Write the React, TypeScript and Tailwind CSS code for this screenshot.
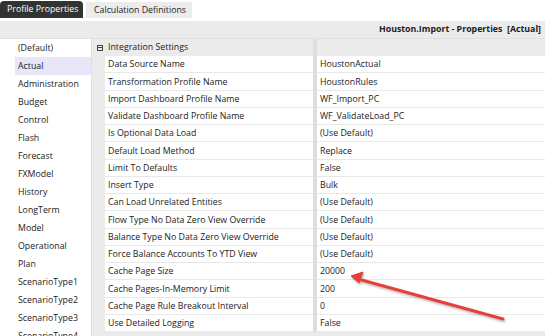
import React from 'react';

const scenarios = [
  '(Default)', 'Actual', 'Administration', 'Budget', 'Control', 'Flash', 'Forecast', 'FXModel',
  'History', 'LongTerm', 'Model', 'Operational', 'Plan', 'ScenarioType1', 'ScenarioType2',
  'ScenarioType3', 'ScenarioType4',
];

const props: [string, string][] = [
  ['Data Source Name', 'HoustonActual'],
  ['Transformation Profile Name', 'HoustonRules'],
  ['Import Dashboard Profile Name', 'WF_Import_PC'],
  ['Validate Dashboard Profile Name', 'WF_ValidateLoad_PC'],
  ['Is Optional Data Load', '(Use Default)'],
  ['Default Load Method', 'Replace'],
  ['Limit To Defaults', 'False'],
  ['Insert Type', 'Bulk'],
  ['Can Load Unrelated Entities', '(Use Default)'],
  ['Flow Type No Data Zero View Override', '(Use Default)'],
  ['Balance Type No Data Zero View Override', '(Use Default)'],
  ['Force Balance Accounts To YTD View', '(Use Default)'],
  ['Cache Page Size', '20000'],
  ['Cache Pages-In-Memory Limit', '200'],
  ['Cache Page Rule Breakout Interval', '0'],
  ['Use Detailed Logging', 'False'],
];

const App: React.FC = () => {
  return (
    <div className="relative w-[545px] h-[336px] overflow-hidden bg-white text-[#222] font-['Open_Sans',sans-serif] text-[8.8px]">
      {/* tabs */}
      <div className="flex h-[18px] items-end gap-[3px] whitespace-nowrap">
        <div className="h-[17.5px] w-[83px] bg-[#333] text-white rounded-t-[4px] flex items-center pl-[7px] leading-none">Profile Properties</div>
        <div className="h-[16px] w-[106px] bg-[#ececec] flex items-center pl-[8px] leading-none">Calculation Definitions</div>
      </div>
      <div className="h-[3px]" />

      {/* title bar */}
      <div className="h-[17.5px] bg-[#ebebeb] border-b border-[#e0e0e0] flex items-center justify-end pr-[4px] font-bold leading-none whitespace-nowrap">
        Houston.Import - Properties&nbsp;&nbsp;[Actual]
      </div>

      <div className="flex">
        {/* scenario list */}
        <div className="w-[91px] pt-[0.5px] shrink-0">
          {scenarios.map(s => (
            <div key={s} className={`h-[18px] ml-[15px] pl-[3px] flex items-center leading-none ${s === 'Actual' ? 'bg-[#e7e7f9]' : ''}`}>{s}</div>
          ))}
        </div>

        {/* property grid */}
        <div className="flex-1 bg-[#ebebeb] border-l border-[#e0e0e0]">
          <div className="h-[17.5px] flex">
            <div className="w-[221px] flex items-center pl-[5px] pt-[1px] gap-[5px] leading-none">
              <span className="w-[6px] h-[6px] border border-[#444] flex items-center justify-center">
                <span className="w-[4px] h-px bg-[#444]" />
              </span>
              Integration Settings
            </div>
            <div className="w-[4px] bg-[#dedede]" />
          </div>
          {props.map(([k, v]) => (
            <div key={k} className="h-[17.25px] flex">
              <div className="w-[13px] shrink-0" />
              <div className="w-[208px] bg-white border-b border-[#e8e8e8] flex items-center pl-[3px] pt-[1.5px] leading-none whitespace-nowrap overflow-hidden">{k}</div>
              <div className="w-[4px] bg-[#dedede]" />
              <div className="flex-1 bg-white border-b border-[#e8e8e8] flex items-center pl-[3px] pt-[1.5px] leading-none">{v}</div>
            </div>
          ))}
        </div>
      </div>

      {/* annotation arrow */}
      <svg className="absolute left-0 top-0 pointer-events-none" width="545" height="336">
        <defs>
          <filter id="sh" x="-20%" y="-20%" width="140%" height="140%">
            <feDropShadow dx="1" dy="1.5" stdDeviation="1" floodColor="#000" floodOpacity="0.3" />
          </filter>
        </defs>
        <g filter="url(#sh)" fill="#e6413b" stroke="#e6413b">
          <line x1="503" y1="319" x2="358" y2="279" strokeWidth="3" strokeLinecap="round" />
          <polygon points="351,276 363,272 359,283" strokeWidth="1" strokeLinejoin="round" />
        </g>
      </svg>
    </div>
  );
};

export default App;
